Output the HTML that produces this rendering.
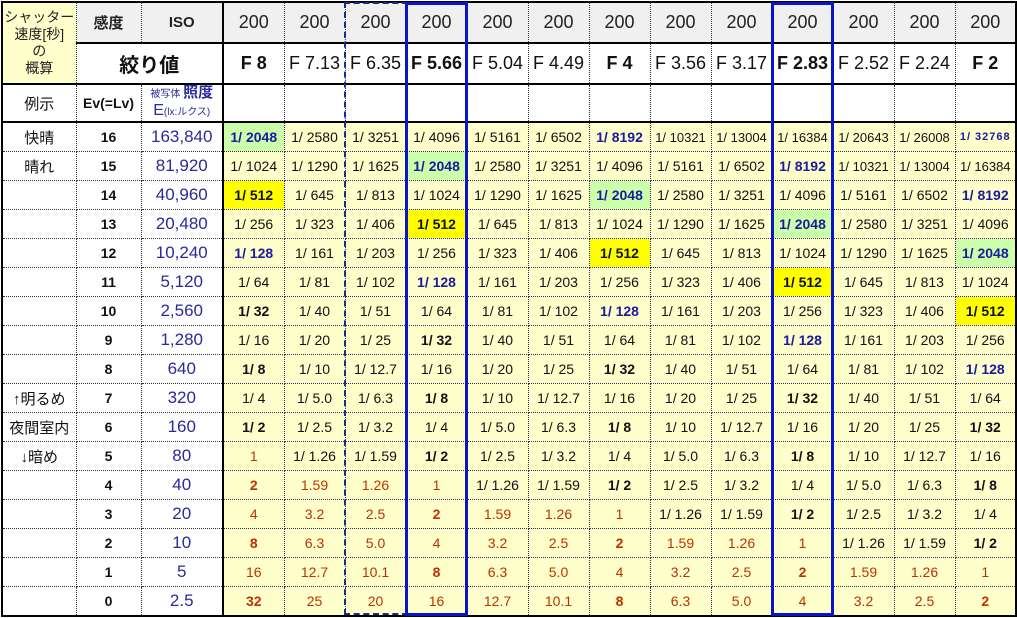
<!DOCTYPE html>
<html><head><meta charset="utf-8">
<style>
body{margin:0;background:#fff;font-family:"Liberation Sans","Noto Sans CJK JP",sans-serif;}
#w{position:relative;width:1017px;height:618px;overflow:hidden}
table{position:absolute;left:1px;top:1px;border-collapse:collapse;table-layout:fixed;border:2px solid #000}
td{border:1px dotted #333;padding:0;text-align:center;white-space:nowrap;overflow:hidden;font-size:14px;color:#111;background:#ffffcc;height:28px}
tr.r1 td{background:#f0f0f0;height:39px;font-size:18px;color:#222}
tr.r2 td{height:39px;font-size:18px;border-top:2px solid #000;background:#fff}
tr.r3 td{height:36px;border-top:2px solid #000;background:#fff}
tr.r4 td{border-top:2px solid #000}
td.c3{border-right:2px solid #000}
td.L{background:#fff;font-size:15px}
td.ev{background:#fff;font-weight:bold;font-size:14px}
td.lx{background:#fff;color:#2a2a9a;font-size:17px}
.b{font-weight:bold}
.bb{font-weight:bold;color:#1a1aa0}
.y{background:#ffff00!important;font-weight:bold}
.g{background:#ccffaa!important;font-weight:bold;color:#1a1aa0}
.r{color:#c03000}
.rb{color:#c03000;font-weight:bold}
.sm{font-size:11px;letter-spacing:1px}
.n{font-size:13px}
.fb{font-size:19px;font-weight:bold}
.bx{position:absolute;border:3px solid #0a14c8;box-sizing:border-box}
</style></head><body><div id="w">
<table>
<colgroup><col style="width:74px"><col style="width:65px"><col style="width:82px">
<col style="width:61px"><col style="width:61px"><col style="width:61px"><col style="width:61px"><col style="width:61px"><col style="width:61px"><col style="width:61px"><col style="width:61px"><col style="width:61px"><col style="width:61px"><col style="width:61px"><col style="width:61px"><col style="width:61px"></colgroup>
<tr class="r1"><td rowspan="2" style="background:#ffffcc;font-size:14px;line-height:17px;color:#222">シャッター<br>速度[秒]<br>の<br>概算</td><td style="font-size:15px;font-weight:bold">感度</td><td class="c3" style="font-size:15px;font-weight:bold">ISO</td><td>200</td><td>200</td><td>200</td><td>200</td><td>200</td><td>200</td><td>200</td><td>200</td><td>200</td><td>200</td><td>200</td><td>200</td><td>200</td></tr>
<tr class="r2"><td colspan="2" class="c3" style="font-size:20px;font-weight:bold">絞り値</td><td class="fb">F 8</td><td>F 7.13</td><td>F 6.35</td><td class="fb">F 5.66</td><td>F 5.04</td><td>F 4.49</td><td class="fb">F 4</td><td>F 3.56</td><td>F 3.17</td><td class="fb">F 2.83</td><td>F 2.52</td><td>F 2.24</td><td class="fb">F 2</td></tr>
<tr class="r3"><td style="font-size:15px">例示</td><td style="font-size:14px;font-weight:bold">Ev(=Lv)</td><td class="c3" style="color:#2a2aa0;font-size:10px;line-height:16px">被写体 <b style="font-size:15px">照度</b><br><span style="font-size:16px">E</span>(lx:ルクス)</td><td></td><td></td><td></td><td></td><td></td><td></td><td></td><td></td><td></td><td></td><td></td><td></td><td></td></tr>
<tr class="r4"><td class="L">快晴</td><td class="ev">16</td><td class="lx c3">163,840</td><td class="g">1/ 2048</td><td>1/ 2580</td><td>1/ 3251</td><td>1/ 4096</td><td>1/ 5161</td><td>1/ 6502</td><td class="bb">1/ 8192</td><td class="n">1/ 10321</td><td class="n">1/ 13004</td><td class="n">1/ 16384</td><td class="n">1/ 20643</td><td class="n">1/ 26008</td><td class="bb sm">1/ 32768</td></tr>
<tr><td class="L">晴れ</td><td class="ev">15</td><td class="lx c3">81,920</td><td>1/ 1024</td><td>1/ 1290</td><td>1/ 1625</td><td class="g">1/ 2048</td><td>1/ 2580</td><td>1/ 3251</td><td>1/ 4096</td><td>1/ 5161</td><td>1/ 6502</td><td class="bb">1/ 8192</td><td class="n">1/ 10321</td><td class="n">1/ 13004</td><td class="n">1/ 16384</td></tr>
<tr><td class="L"></td><td class="ev">14</td><td class="lx c3">40,960</td><td class="y">1/ 512</td><td>1/ 645</td><td>1/ 813</td><td>1/ 1024</td><td>1/ 1290</td><td>1/ 1625</td><td class="g">1/ 2048</td><td>1/ 2580</td><td>1/ 3251</td><td>1/ 4096</td><td>1/ 5161</td><td>1/ 6502</td><td class="bb">1/ 8192</td></tr>
<tr><td class="L"></td><td class="ev">13</td><td class="lx c3">20,480</td><td>1/ 256</td><td>1/ 323</td><td>1/ 406</td><td class="y">1/ 512</td><td>1/ 645</td><td>1/ 813</td><td>1/ 1024</td><td>1/ 1290</td><td>1/ 1625</td><td class="g">1/ 2048</td><td>1/ 2580</td><td>1/ 3251</td><td>1/ 4096</td></tr>
<tr><td class="L"></td><td class="ev">12</td><td class="lx c3">10,240</td><td class="bb">1/ 128</td><td>1/ 161</td><td>1/ 203</td><td>1/ 256</td><td>1/ 323</td><td>1/ 406</td><td class="y">1/ 512</td><td>1/ 645</td><td>1/ 813</td><td>1/ 1024</td><td>1/ 1290</td><td>1/ 1625</td><td class="g">1/ 2048</td></tr>
<tr><td class="L"></td><td class="ev">11</td><td class="lx c3">5,120</td><td>1/ 64</td><td>1/ 81</td><td>1/ 102</td><td class="bb">1/ 128</td><td>1/ 161</td><td>1/ 203</td><td>1/ 256</td><td>1/ 323</td><td>1/ 406</td><td class="y">1/ 512</td><td>1/ 645</td><td>1/ 813</td><td>1/ 1024</td></tr>
<tr><td class="L"></td><td class="ev">10</td><td class="lx c3">2,560</td><td class="b">1/ 32</td><td>1/ 40</td><td>1/ 51</td><td>1/ 64</td><td>1/ 81</td><td>1/ 102</td><td class="bb">1/ 128</td><td>1/ 161</td><td>1/ 203</td><td>1/ 256</td><td>1/ 323</td><td>1/ 406</td><td class="y">1/ 512</td></tr>
<tr><td class="L"></td><td class="ev">9</td><td class="lx c3">1,280</td><td>1/ 16</td><td>1/ 20</td><td>1/ 25</td><td class="b">1/ 32</td><td>1/ 40</td><td>1/ 51</td><td>1/ 64</td><td>1/ 81</td><td>1/ 102</td><td class="bb">1/ 128</td><td>1/ 161</td><td>1/ 203</td><td>1/ 256</td></tr>
<tr><td class="L"></td><td class="ev">8</td><td class="lx c3">640</td><td class="b">1/ 8</td><td>1/ 10</td><td>1/ 12.7</td><td>1/ 16</td><td>1/ 20</td><td>1/ 25</td><td class="b">1/ 32</td><td>1/ 40</td><td>1/ 51</td><td>1/ 64</td><td>1/ 81</td><td>1/ 102</td><td class="bb">1/ 128</td></tr>
<tr><td class="L">↑明るめ</td><td class="ev">7</td><td class="lx c3">320</td><td>1/ 4</td><td>1/ 5.0</td><td>1/ 6.3</td><td class="b">1/ 8</td><td>1/ 10</td><td>1/ 12.7</td><td>1/ 16</td><td>1/ 20</td><td>1/ 25</td><td class="b">1/ 32</td><td>1/ 40</td><td>1/ 51</td><td>1/ 64</td></tr>
<tr><td class="L">夜間室内</td><td class="ev">6</td><td class="lx c3">160</td><td class="b">1/ 2</td><td>1/ 2.5</td><td>1/ 3.2</td><td>1/ 4</td><td>1/ 5.0</td><td>1/ 6.3</td><td class="b">1/ 8</td><td>1/ 10</td><td>1/ 12.7</td><td>1/ 16</td><td>1/ 20</td><td>1/ 25</td><td class="b">1/ 32</td></tr>
<tr><td class="L">↓暗め</td><td class="ev">5</td><td class="lx c3">80</td><td class="r">1</td><td>1/ 1.26</td><td>1/ 1.59</td><td class="b">1/ 2</td><td>1/ 2.5</td><td>1/ 3.2</td><td>1/ 4</td><td>1/ 5.0</td><td>1/ 6.3</td><td class="b">1/ 8</td><td>1/ 10</td><td>1/ 12.7</td><td>1/ 16</td></tr>
<tr><td class="L"></td><td class="ev">4</td><td class="lx c3">40</td><td class="rb">2</td><td class="r">1.59</td><td class="r">1.26</td><td class="r">1</td><td>1/ 1.26</td><td>1/ 1.59</td><td class="b">1/ 2</td><td>1/ 2.5</td><td>1/ 3.2</td><td>1/ 4</td><td>1/ 5.0</td><td>1/ 6.3</td><td class="b">1/ 8</td></tr>
<tr><td class="L"></td><td class="ev">3</td><td class="lx c3">20</td><td class="r">4</td><td class="r">3.2</td><td class="r">2.5</td><td class="rb">2</td><td class="r">1.59</td><td class="r">1.26</td><td class="r">1</td><td>1/ 1.26</td><td>1/ 1.59</td><td class="b">1/ 2</td><td>1/ 2.5</td><td>1/ 3.2</td><td>1/ 4</td></tr>
<tr><td class="L"></td><td class="ev">2</td><td class="lx c3">10</td><td class="rb">8</td><td class="r">6.3</td><td class="r">5.0</td><td class="r">4</td><td class="r">3.2</td><td class="r">2.5</td><td class="rb">2</td><td class="r">1.59</td><td class="r">1.26</td><td class="r">1</td><td>1/ 1.26</td><td>1/ 1.59</td><td class="b">1/ 2</td></tr>
<tr><td class="L"></td><td class="ev">1</td><td class="lx c3">5</td><td class="r">16</td><td class="r">12.7</td><td class="r">10.1</td><td class="rb">8</td><td class="r">6.3</td><td class="r">5.0</td><td class="r">4</td><td class="r">3.2</td><td class="r">2.5</td><td class="rb">2</td><td class="r">1.59</td><td class="r">1.26</td><td class="r">1</td></tr>
<tr><td class="L"></td><td class="ev">0</td><td class="lx c3">2.5</td><td class="rb">32</td><td class="r">25</td><td class="r">20</td><td class="r">16</td><td class="r">12.7</td><td class="r">10.1</td><td class="rb">8</td><td class="r">6.3</td><td class="r">5.0</td><td class="r">4</td><td class="r">3.2</td><td class="r">2.5</td><td class="rb">2</td></tr>
</table>
<div style="position:absolute;left:344px;top:2px;width:64px;height:613px;border:2.5px dashed #1a2a8a;border-right:none;box-sizing:border-box"></div>
<div class="bx" style="left:405px;top:2px;width:63px;height:614px"></div>
<div class="bx" style="left:771px;top:2px;width:63px;height:614px"></div>
</div></body></html>
